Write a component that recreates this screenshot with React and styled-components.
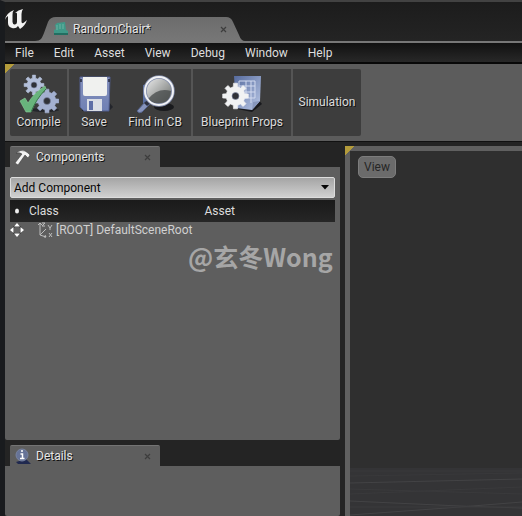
import React from "react";
import styled, { createGlobalStyle, css } from "styled-components";

const GlobalStyle = createGlobalStyle`
  * { box-sizing: border-box; }
  body { margin: 0; background: #242424; color: #dcdcdc; font: 12px/16px Roboto, "Noto Sans CJK SC", sans-serif; }
  button { font: inherit; color: inherit; border: 0; background: none; padding: 0; margin: 0; }
  svg { display: block; flex: none; }
`;

const Editor = styled.div`
  position: relative;
  min-height: 100vh;
  display: flex;
  flex-direction: column;
  border-top: 2px solid #424242;
  border-left: 5px solid #191b1e;
  background: #242424;
  overflow: hidden;
`;

const TitleBar = styled.header`
  height: 39px;
  display: flex;
  align-items: flex-end;
  background: linear-gradient(#1c1c1c, #242424);
`;

const Logo = styled.div`
  width: 30px;
  height: 32px;
`;

const DocumentTab = styled.div`
  width: 210px;
  height: 24px;
  display: flex;
  align-items: center;
  gap: 4px;
  padding: 0 18px;
  background: linear-gradient(#6c6c6c, #777777);
  clip-path: path("M0 24 C6 24 7 21 9 16 L13 5 Q15 0 21 0 H191 Q196 0 198 5 L204 18 Q206 24 210 24 Z");
`;

const TabLabel = styled.h2`
  flex: 1;
  margin: 0;
  font-size: 12px;
  font-weight: 400;
  color: #e6e6e6;
  text-shadow: 1px 1px 0 #111;
`;

const CloseButton = styled.button`
  color: #3d3d3d;
`;

const MenuBar = styled.nav`
  height: 23px;
  display: flex;
  align-items: center;
  border-top: 2px solid #777777;
  border-bottom: 2px solid #080808;
  background: linear-gradient(#111111, #282828);
`;

const MenuButton = styled.button`
  padding: 0 10px;
  color: #dedede;
`;

const gripCorner = css`
  background-image: linear-gradient(135deg, #b39b3b 7px, transparent 7px);
  background-repeat: no-repeat;
`;

const ToolbarArea = styled.section`
  ${gripCorner}
  display: flex;
  background-color: #5c5c5c;
  padding: 5px;
`;

const Toolbar = styled.div`
  height: 67px;
  display: flex;
  align-items: stretch;
  background: #3d3d3d;
  border-radius: 2px;
`;

const ToolGroup = styled.div`
  display: flex;
  & + & { border-left: 2px solid #555555; }
`;

const ToolButton = styled.button`
  width: ${({ $width }) => $width}px;
  padding-bottom: 2px;
  display: flex;
  flex-direction: column;
  align-items: center;
  justify-content: center;
  white-space: nowrap;
  color: #dcdcdc;
  text-shadow: 1px 1px 0 #111;
`;

const Workspace = styled.main`
  flex: 1;
  display: grid;
  grid-template-columns: minmax(0, 335fr) minmax(0, 177fr);
  column-gap: 5px;
  padding-top: 4px;
  border-top: 1px solid #111111;
`;

const Sidebar = styled.div`
  display: flex;
  flex-direction: column;
  gap: 5px;
`;

const Panel = styled.section`
  display: flex;
  flex-direction: column;
  flex: ${({ $weight }) => $weight};
`;

const PanelTab = styled.header`
  width: 150px;
  height: 21px;
  margin-left: 5px;
  padding: 0 9px 0 4px;
  display: flex;
  align-items: center;
  gap: 4px;
  background: #5e5e5e;
  border-top: 1px solid #747474;
  border-radius: 2px 2px 0 0;
`;

const PanelBody = styled.div`
  flex: 1;
  padding: 10px 5px 0;
  background: #5e5e5e;
  border-radius: 0 0 2px 2px;
`;

const AddButton = styled.button`
  width: 100%;
  height: 21px;
  padding: 0 5px 0 3px;
  display: flex;
  align-items: center;
  justify-content: space-between;
  color: #080808;
  background: linear-gradient(#a5a5a5, #d0d0d0);
  border: 1px solid #dddddd;
  border-radius: 2px;
`;

const ComponentTable = styled.table`
  width: 100%;
  margin-top: 2px;
  border-collapse: collapse;
  table-layout: fixed;
`;

const HeadCell = styled.th`
  width: ${({ $width }) => $width};
  height: 22px;
  padding: 0 0 0 4px;
  background: linear-gradient(#1a1a1a, #262626);
  text-align: left;
  font-weight: 400;
`;

const Cell = styled.td`
  height: 16px;
  padding: 0;
  color: #d0d0d0;
`;

const ComponentName = styled.span`
  display: flex;
  align-items: center;
  gap: 3px;
  padding-left: 12px;
  white-space: nowrap;
`;

const Viewport = styled.section`
  ${gripCorner}
  display: flex;
  background-color: #606060;
  padding: 5px 0 0 5px;
`;

const Scene = styled.div`
  flex: 1;
  display: flex;
  flex-direction: column;
  justify-content: space-between;
  background: #2f2f2f;
`;

const ViewButton = styled.button`
  align-self: flex-start;
  margin: 5px 8px;
  height: 22px;
  padding: 0 5px;
  border-radius: 5px;
  background: #6b6b6b;
  border: 1px solid #7d7d7d;
  color: #262626;
`;

const Watermark = styled.div`
  position: absolute;
  left: 183px;
  top: 236px;
  font: 700 25px/36px "Noto Sans CJK SC", sans-serif;
  color: #a6a6a6;
  white-space: nowrap;
  pointer-events: none;
`;

function gearPath(cx, cy, outer, inner, teeth) {
  const step = (Math.PI * 2) / teeth;
  const point = (r, a) => `${(cx + r * Math.cos(a)).toFixed(2)} ${(cy + r * Math.sin(a)).toFixed(2)}`;
  const parts = [];
  for (let i = 0; i < teeth; i += 1) {
    const a = i * step;
    parts.push(point(inner, a - step * 0.3), point(outer, a - step * 0.2), point(outer, a + step * 0.2), point(inner, a + step * 0.3));
  }
  return `M${parts.join("L")}Z`;
}

function Gear({ x, y, outer, inner, hole, teeth = 8, fill }) {
  return (
    <>
      <path d={gearPath(x, y, outer, inner, teeth)} fill={fill} stroke={fill} strokeWidth="0.6" strokeLinejoin="round" />
      <circle cx={x} cy={y} r={hole} fill="#303238" stroke="#7f8aa8" strokeWidth="0.6" />
    </>
  );
}

const CompileIcon = () => (
  <svg width="40" height="40" viewBox="0 0 40 40">
    <ellipse cx="26" cy="36" rx="14" ry="2" fill="#24262b" />
    <Gear x={15} y={11} outer={10} inner={7} hole={3} fill="#b3bfd9" />
    <Gear x={28} y={27} outer={12} inner={9} hole={3.5} fill="#a3b0d0" />
    <path d="M1 27L6 24L9 29Q15 19 26 12L27 15Q17 25 12 38L7 38Z" fill="#68b47c" stroke="#8fd09a" strokeWidth="0.6" />
    <path d="M12 38Q17 25 27 15" fill="none" stroke="#357247" strokeWidth="1" />
  </svg>
);

const SaveIcon = () => (
  <svg width="40" height="40" viewBox="0 0 40 40">
    <defs>
      <linearGradient id="floppy" x2="0" y2="1"><stop stopColor="#8793bd" /><stop offset="1" stopColor="#6f80b4" /></linearGradient>
    </defs>
    <path d="M34 27L39 33L35 37H8V34Z" fill="#23252b" />
    <path d="M6 3H36L35 37H10L6 33Z" fill="url(#floppy)" stroke="#505d8d" />
    <path d="M9 3H33V20Q33 22 31 22H11Q9 22 9 20Z" fill="#f0f1ef" />
    <path d="M13 25H28V37H13Z" fill="#d9dde5" />
    <path d="M15 27H19V36H15Z" fill="#5c6da6" />
    <path d="M7 5V8M35 5V8" stroke="#25283b" strokeWidth="1.5" />
  </svg>
);

const FindIcon = () => (
  <svg width="40" height="40" viewBox="0 0 40 40">
    <defs>
      <linearGradient id="lens" x2="1" y2="1"><stop stopColor="#f2f2f2" /><stop offset="1" stopColor="#5e625f" /></linearGradient>
    </defs>
    <ellipse cx="29" cy="33" rx="10" ry="4" fill="#191a1d" />
    <path d="M8 11L14 10V29H8Z" fill="#5b70a3" />
    <path d="M2 37L11 27L15 30L7 38Q4 40 2 37Z" fill="#8794bd" stroke="#56658f" />
    <path d="M9 29L13 26L16 29L12 32Z" fill="#2c3040" />
    <circle cx="24" cy="17" r="14" fill="url(#lens)" stroke="#818ba9" strokeWidth="3.5" />
    <path d="M13 25Q23 13 36 17Q35 29 25 29Q17 30 13 25Z" fill="#464a49" opacity="0.75" />
    <circle cx="24" cy="17" r="14" fill="none" stroke="#f1f2f5" strokeWidth="2" />
  </svg>
);

const PropsIcon = () => (
  <svg width="40" height="40" viewBox="0 0 40 40">
    <defs>
      <linearGradient id="sheet" x2="1" y2="1"><stop stopColor="#566b9e" /><stop offset="1" stopColor="#bac8e7" /></linearGradient>
    </defs>
    <path d="M35 24L40 30L30 38L15 35Z" fill="#18191d" />
    <path d="M12 2H39L38 27L30 36L14 34Z" fill="url(#sheet)" />
    <path d="M17 7H33V24H17ZM17 12H33M17 18H33M24 7V24M29 7V29" fill="none" stroke="#d2daef" strokeWidth="1" />
    <path d="M30 36L31 28L38 27Z" fill="#8797bd" />
    <Gear x={13.5} y={22} outer={13} inner={9.5} hole={3.5} fill="#f1f2f3" />
  </svg>
);

const UnrealLogo = () => (
  <svg width="23" height="20" viewBox="0 0 23 20">
    <path d="M0 11Q1 4 9 1Q7 3 7.5 6V13Q8 16 10 15.5Q12 15 12 13V5Q12 3 10 4Q13 1 18 0Q16.500 2 16.500 5V13Q17 16 22 11Q20 17 15 20L13 17Q11 20 7 19Q3 18 3 14V7Q1 8 0 11Z" fill="#f3f3f3" />
  </svg>
);

const BlueprintIcon = () => (
  <svg width="16" height="14" viewBox="0 0 16 14">
    <path d="M2 3L4 1L12 0L13 8L15 9V13H1V8L3 7Z" fill="#3f9988" />
    <path d="M4 3V8M7 2V7M10 2V7" stroke="#6fb3a4" />
    <path d="M1 11H15V13H1Z" fill="#226e61" />
  </svg>
);

const HammerIcon = () => (
  <svg width="18" height="17" viewBox="0 0 18 17">
    <path d="M2 4Q7 0 11 2L14 4L16 6L14 9L11 6L4 16L1 14L8 5Q6 3 2 4Z" fill="#f3f3f3" stroke="#333" strokeWidth="0.5" />
  </svg>
);

const DetailsIcon = () => (
  <svg width="18" height="17" viewBox="0 0 18 17">
    <path d="M2 14L12 11L17 16H4Z" fill="#20294f" />
    <circle cx="8" cy="7" r="6" fill="#667397" stroke="#7883a0" />
    <path d="M6.500 6H8.500V10M6 10.500H10.500" fill="none" stroke="#fff" strokeWidth="1.5" />
    <circle cx="8" cy="3" r="1" fill="#fff" />
  </svg>
);

const CloseIcon = () => (
  <svg width="7" height="7" viewBox="0 0 7 7"><path d="M1 1L6 6M6 1L1 6" stroke="currentColor" strokeWidth="1.2" /></svg>
);

const MoveIcon = () => (
  <svg width="14" height="14" viewBox="0 0 14 14">
    <circle cx="7" cy="7" r="5" fill="#2c2c2c" />
    <circle cx="7" cy="7" r="3.5" fill="#626262" />
    <path d="M7 0L10 3.500H4ZM7 14L4 10.500H10ZM0 7L3.500 4V10ZM14 7L10.500 10V4Z" fill="#fff" />
  </svg>
);

const AxesIcon = () => (
  <svg width="16" height="16" viewBox="0 0 16 16" fill="none" stroke="#bdbdbd">
    <path d="M3 1V13L9 15M3 13L9 7M1 3L3 1L5 3M7 15L9 15L8 13M5 1H8L5 4H8M11 3L13 6L15 3M13 6V8M12 11L15 15M15 11L12 15" />
  </svg>
);

const DotIcon = () => (
  <svg width="6" height="8" viewBox="0 0 6 8"><ellipse cx="3" cy="4" rx="2" ry="2.5" fill="#eee" /></svg>
);

const DownIcon = () => (
  <svg width="8" height="5" viewBox="0 0 8 5"><path d="M0 0H8L4 4.500Z" fill="#050505" /></svg>
);

const GridStripe = styled.svg`
  width: 100%;
  height: 49px;
`;

const FloorGrid = () => (
  <GridStripe viewBox="0 0 172 49" preserveAspectRatio="none" fill="none" stroke="#434345">
    <path d="M0 1H172V49H0Z" fill="#343436" stroke="none" />
    <path d="M0 4H172M0 9L172 6" stroke="#39393b" />
    <path d="M0 16L172 12M0 34L110 39L172 41M0 48L110 40L172 35" />
    <path d="M0 22L172 27M0 27L172 20M0 40H172" stroke="#3a3a3c" />
  </GridStripe>
);

const menus = ["File", "Edit", "Asset", "View", "Debug", "Window", "Help"];

const toolGroups = [
  [{ label: "Compile", width: 57, Icon: CompileIcon }],
  [{ label: "Save", width: 50, Icon: SaveIcon }, { label: "Find in CB", width: 72, Icon: FindIcon }],
  [{ label: "Blueprint Props", width: 98, Icon: PropsIcon }],
  [{ label: "Simulation", width: 68 }],
];

function TabHeader({ title, Icon }) {
  return (
    <PanelTab>
      <Icon />
      <TabLabel>{title}</TabLabel>
      <CloseButton aria-label={`Close ${title}`}><CloseIcon /></CloseButton>
    </PanelTab>
  );
}

export default function App() {
  return (
    <Editor>
      <GlobalStyle />
      <TitleBar>
        <Logo><UnrealLogo /></Logo>
        <DocumentTab>
          <BlueprintIcon />
          <TabLabel as="h1">RandomChair*</TabLabel>
          <CloseButton aria-label="Close RandomChair"><CloseIcon /></CloseButton>
        </DocumentTab>
      </TitleBar>
      <MenuBar>
        {menus.map((name) => <MenuButton key={name}>{name}</MenuButton>)}
      </MenuBar>
      <ToolbarArea>
        <Toolbar>
          {toolGroups.map((group) => (
            <ToolGroup key={group[0].label}>
              {group.map(({ label, width, Icon }) => (
                <ToolButton key={label} $width={width}>
                  {Icon && <Icon />}
                  {label}
                </ToolButton>
              ))}
            </ToolGroup>
          ))}
        </Toolbar>
      </ToolbarArea>
      <Workspace>
        <Sidebar>
          <Panel $weight="294 1 0">
            <TabHeader title="Components" Icon={HammerIcon} />
            <PanelBody>
              <AddButton>Add Component<DownIcon /></AddButton>
              <ComponentTable>
                <thead>
                  <tr>
                    <HeadCell $width="15px" aria-label="Mobility"><DotIcon /></HeadCell>
                    <HeadCell $width="54%">Class</HeadCell>
                    <HeadCell>Asset</HeadCell>
                  </tr>
                </thead>
                <tbody>
                  <tr>
                    <Cell><MoveIcon /></Cell>
                    <Cell><ComponentName><AxesIcon />[ROOT] DefaultSceneRoot</ComponentName></Cell>
                    <Cell />
                  </tr>
                </tbody>
              </ComponentTable>
            </PanelBody>
          </Panel>
          <Panel $weight="71 1 0">
            <TabHeader title="Details" Icon={DetailsIcon} />
            <PanelBody />
          </Panel>
        </Sidebar>
        <Viewport>
          <Scene>
            <ViewButton>View</ViewButton>
            <FloorGrid />
          </Scene>
        </Viewport>
      </Workspace>
      <Watermark>@玄冬Wong</Watermark>
    </Editor>
  );
}
